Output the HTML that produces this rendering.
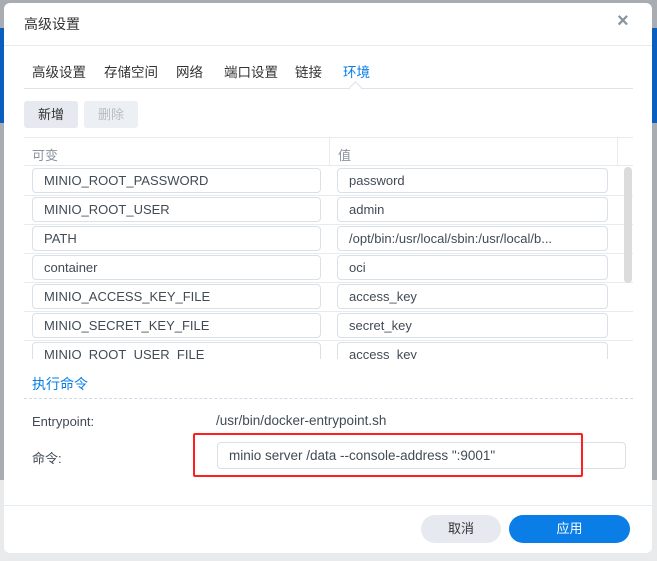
<!DOCTYPE html>
<html><head><meta charset="utf-8"><style>
*{box-sizing:border-box;margin:0;padding:0}
body{width:657px;height:561px;background:#a9adb2;position:relative;overflow:hidden;font-family:"Liberation Sans","Noto Sans CJK SC",sans-serif;color:#414b55;font-size:13px}
.blue{position:absolute;background:#0a5ebd}
.abs{position:absolute;white-space:nowrap}
.in{position:absolute;height:25px;border:1px solid #d9e0e8;border-radius:4px;padding-left:11px;line-height:23px;font-size:13px;color:#414b55;white-space:nowrap;overflow:hidden;background:#fff}
.sep{position:absolute;left:24px;width:609px;height:1px;background:#e6ebf0}
</style></head><body>
<div class="blue" style="left:0;top:28px;width:4px;height:95px"></div>
<div class="blue" style="left:652px;top:28px;width:5px;height:95px"></div>
<div class="abs" style="left:0;top:480px;width:657px;height:81px;background:#e8eaec"></div>
<div class="abs" style="left:4px;top:3px;width:648px;height:550px;background:#fff;border-radius:6px"></div>

<div class="abs" style="left:24px;top:14px;font-size:14px;color:#333">高级设置</div>
<div class="abs" style="left:617px;top:10px;font-size:20px;color:#8a939c;font-weight:bold">×</div>
<div class="abs" style="left:4px;top:45px;width:648px;height:1px;background:#e6ebf0"></div>

<div class="abs" style="left:32px;top:61px;font-size:13.5px;color:#333">高级设置</div>
<div class="abs" style="left:104px;top:61px;font-size:13.5px;color:#333">存储空间</div>
<div class="abs" style="left:176px;top:61px;font-size:13.5px;color:#333">网络</div>
<div class="abs" style="left:224px;top:61px;font-size:13.5px;color:#333">端口设置</div>
<div class="abs" style="left:295px;top:61px;font-size:13.5px;color:#333">链接</div>
<div class="abs" style="left:343px;top:61px;font-size:13.5px;color:#0a7ee6">环境</div>
<div class="abs" style="left:24px;top:88px;width:609px;height:1px;background:#dde3ea"></div>
<div class="abs" style="left:351px;top:83px;width:9px;height:9px;background:#fff;border-left:1px solid #dde3ea;border-top:1px solid #dde3ea;transform:rotate(45deg)"></div>

<div class="abs" style="left:24px;top:101px;width:54px;height:27px;background:#e6eaf0;border-radius:3px;text-align:center;line-height:27px;color:#333">新增</div>
<div class="abs" style="left:84px;top:101px;width:54px;height:27px;background:#eceff3;border-radius:3px;text-align:center;line-height:27px;color:#b8bec6">删除</div>

<div class="abs" style="left:24px;top:137px;width:609px;height:1px;background:#e6ebf0"></div>
<div class="abs" style="left:24px;top:165px;width:609px;height:1px;background:#e6ebf0"></div>
<div class="abs" style="left:329px;top:137px;width:1px;height:28px;background:#e6ebf0"></div>
<div class="abs" style="left:617px;top:137px;width:1px;height:28px;background:#e6ebf0"></div>
<div class="abs" style="left:32px;top:145px;color:#8a939c">可变</div>
<div class="abs" style="left:338px;top:145px;color:#8a939c">值</div>

<div class="abs" style="left:0;top:166px;width:657px;height:193px;overflow:hidden">
 <div class="sep" style="top:29px"></div><div class="sep" style="top:58px"></div><div class="sep" style="top:87px"></div><div class="sep" style="top:116px"></div><div class="sep" style="top:145px"></div><div class="sep" style="top:174px"></div>
 <div class="in" style="left:32px;top:2px;width:289px">MINIO_ROOT_PASSWORD</div><div class="in" style="left:337px;top:2px;width:271px">password</div>
 <div class="in" style="left:32px;top:31px;width:289px">MINIO_ROOT_USER</div><div class="in" style="left:337px;top:31px;width:271px">admin</div>
 <div class="in" style="left:32px;top:60px;width:289px">PATH</div><div class="in" style="left:337px;top:60px;width:271px">/opt/bin:/usr/local/sbin:/usr/local/b...</div>
 <div class="in" style="left:32px;top:89px;width:289px">container</div><div class="in" style="left:337px;top:89px;width:271px">oci</div>
 <div class="in" style="left:32px;top:118px;width:289px">MINIO_ACCESS_KEY_FILE</div><div class="in" style="left:337px;top:118px;width:271px">access_key</div>
 <div class="in" style="left:32px;top:147px;width:289px">MINIO_SECRET_KEY_FILE</div><div class="in" style="left:337px;top:147px;width:271px">secret_key</div>
 <div class="in" style="left:32px;top:176px;width:289px">MINIO_ROOT_USER_FILE</div><div class="in" style="left:337px;top:176px;width:271px">access_key</div>
 <div class="abs" style="left:624px;top:1px;width:8px;height:116px;background:#dcdcdc;border-radius:4px"></div>
</div>

<div class="abs" style="left:32px;top:374px;font-size:14px;color:#0a7ee6">执行命令</div>
<div class="abs" style="left:24px;top:398px;width:609px;border-top:1px dashed #cfdbe8"></div>
<div class="abs" style="left:32px;top:414px">Entrypoint:</div>
<div class="abs" style="left:216px;top:413px;font-size:13.5px">/usr/bin/docker-entrypoint.sh</div>
<div class="abs" style="left:32px;top:448px">命令:</div>
<div class="in" style="left:217px;top:442px;width:409px;height:27px;line-height:25px;padding-left:11px;font-size:13.5px">minio server /data --console-address ":9001"</div>
<div class="abs" style="left:193px;top:433px;width:390px;height:44px;border:2px solid #ff1f1f;border-radius:2px"></div>

<div class="abs" style="left:4px;top:505px;width:648px;height:1px;background:#e6ebf0"></div>
<div class="abs" style="left:421px;top:515px;width:80px;height:28px;background:#e6eaf0;border-radius:14px;text-align:center;line-height:28px;color:#333">取消</div>
<div class="abs" style="left:509px;top:515px;width:121px;height:28px;background:#0a7ee6;border-radius:14px;text-align:center;line-height:28px;color:#fff">应用</div>
</body></html>
